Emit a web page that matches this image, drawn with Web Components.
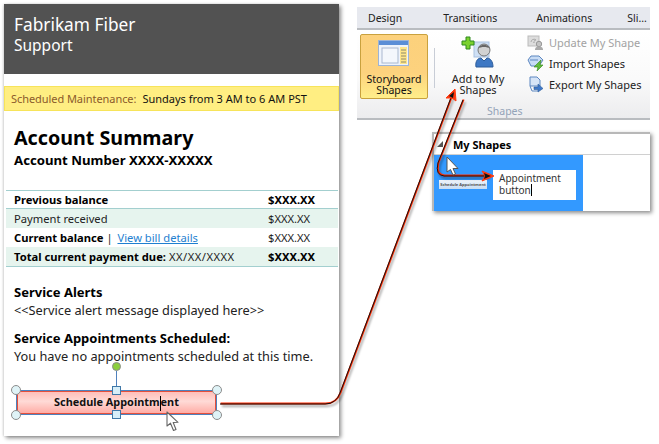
<!DOCTYPE html>
<html>
<head>
<meta charset="utf-8">
<style>
  html, body { margin: 0; height: 100%; background: #fff; overflow: hidden; }
  body { font-family: "Noto Sans", "Liberation Sans", sans-serif; color: #111; }
  #stage { position: relative; width: 659px; height: 444px; display: flex; padding: 4px 0 0 4px; box-sizing: border-box; }
</style>
</head>
<body>
<div id="stage">
  <fab-page>
    <fab-header>
      <span>Fabrikam Fiber</span>
      <span slot="sub">Support</span>
    </fab-header>
    <fab-banner label="Scheduled Maintenance:">Sundays from 3 AM to 6 AM PST</fab-banner>
    <fab-summary title-text="Account Summary" number="Account Number XXXX-XXXXX"></fab-summary>
    <fab-balances>
      <fab-row amount="$XXX.XX" bold><b>Previous balance</b></fab-row>
      <fab-row amount="$XXX.XX" shade>Payment received</fab-row>
      <fab-row amount="$XXX.XX"><b>Current balance</b>&nbsp;|&nbsp;<a>View bill details</a></fab-row>
      <fab-row amount="$XXX.XX" bold shade><b>Total current payment due:</b>&nbsp;<span>XX/XX/XXXX</span></fab-row>
    </fab-balances>
    <fab-notice heading="Service Alerts">&lt;&lt;Service alert message displayed here&gt;&gt;</fab-notice>
    <fab-notice heading="Service Appointments Scheduled:">You have no appointments scheduled at this time.</fab-notice>
    <fab-selected-button>Schedule Appointm<i></i>ent</fab-selected-button>
  </fab-page>
  <div style="display:flex;flex-direction:column;margin-left:18px">
    <sb-ribbon></sb-ribbon>
    <sb-my-shapes></sb-my-shapes>
  </div>
  <sb-connectors></sb-connectors>
</div>

<script>
class Component extends HTMLElement {
  constructor(template) {
    super()
    const _template = document.createElement('template')
    _template.innerHTML = template
    this.attachShadow({ mode: 'open' })
    this.shadowRoot.appendChild(_template.content.cloneNode(true))
  }
}

class FabPage extends Component {
  constructor() {
    super(`
      <style>
        :host { display: flex; flex-direction: column; width: 335px; height: 432px; background: #fff;
          box-shadow: 2px 2px 4px rgba(0,0,0,.45), -1px 0 2px rgba(0,0,0,.12); }
      </style>
      <slot></slot>
    `)
  }
}

class FabHeader extends Component {
  constructor() {
    super(`
      <style>
        :host { display: flex; flex-direction: column; height: 70px; box-sizing: border-box; padding: 10px 10px 0; background: #525252; color: #fff; }
        .a { font-size: 17.3px; line-height: 22px; }
        .b { font-size: 15.5px; line-height: 18px; }
      </style>
      <div class="a"><slot></slot></div>
      <div class="b"><slot name="sub"></slot></div>
    `)
  }
}

class FabBanner extends Component {
  constructor() {
    super(`
      <style>
        :host { display: flex; align-items: center; height: 25px; box-sizing: border-box; margin-top: 12px; padding-left: 6px;
          background: #ffee82; border: 1px solid #f7e45a; font-size: 11px; color: #111; white-space: nowrap; }
        span { color: #8b5a2b; margin-right: 6px; letter-spacing: -.06px; }
      </style>
      <span></span><slot></slot>
    `)
  }
  connectedCallback() {
    this.shadowRoot.querySelector('span').textContent = this.getAttribute('label')
  }
}

class FabSummary extends Component {
  constructor() {
    super(`
      <style>
        :host { display: block; padding: 14px 10px 0; color: #000; font-weight: 700; height: 79px; box-sizing: border-box; }
        h1 { margin: 0; font-size: 19.7px; line-height: 26px; }
        h2 { margin: 0; font-size: 13.2px; line-height: 19px; }
      </style>
      <h1></h1><h2></h2>
    `)
  }
  connectedCallback() {
    this.shadowRoot.querySelector('h1').textContent = this.getAttribute('title-text')
    this.shadowRoot.querySelector('h2').textContent = this.getAttribute('number')
  }
}

class FabBalances extends Component {
  constructor() {
    super(`
      <style>
        :host { display: block; margin: 0 1px 6.6px 2px; border-top: 1px solid #a3cfcf; border-bottom: 1px solid #a3cfcf; }
      </style>
      <slot></slot>
    `)
  }
}

class FabRow extends Component {
  constructor() {
    super(`
      <style>
        :host { display: grid; grid-template-columns: 254px 1fr; align-items: center; height: 19px; padding-left: 8px;
          font-size: 11.2px; color: #222; white-space: nowrap; }
        :host([shade]) { background: #e6f4ee; }
        :host(:first-child) { border-bottom: 1px solid #a3cfcf; height: 17px; }
        ::slotted(b) { color: #000; }
        ::slotted(a) { color: #1f7fd0; text-decoration: underline; margin-left: 2px; }
        ::slotted(span) { letter-spacing: .5px; }
        :host([bold]) .amt { font-weight: 700; color: #000; }
      </style>
      <div><slot></slot></div>
      <div class="amt"></div>
    `)
  }
  connectedCallback() {
    this.shadowRoot.querySelector('.amt').textContent = this.getAttribute('amount')
  }
}

class FabNotice extends Component {
  constructor() {
    super(`
      <style>
        :host { display: block; padding: 10.8px 10px 0; font-size: 12.75px; line-height: 17.6px; color: #222; white-space: nowrap; }
        h3 { margin: 0; font-size: 13px; line-height: 17.6px; color: #000; font-weight: 700; }
      </style>
      <h3></h3><slot></slot>
    `)
  }
  connectedCallback() {
    this.shadowRoot.querySelector('h3').textContent = this.getAttribute('heading')
  }
}

class FabSelectedButton extends Component {
  constructor() {
    super(`
      <style>
        :host { position: relative; display: flex; align-items: center; justify-content: center; width: 201px; height: 25px; box-sizing: border-box;
          margin: 24.4px 0 0 12px; border: 1px solid #4f81bd; outline: 1px solid #e4503c; outline-offset: -2px;
          background: linear-gradient(#ffbcb6, #ffdad6 45%, #ffa9a2); font-size: 10.9px; font-weight: 700; color: #111; white-space: nowrap; }
        ::slotted(i) { display: inline-block; width: 0; height: 15px; border-left: 1px solid #000; vertical-align: middle; }
        .h { position: absolute; box-sizing: border-box; }
        .c { width: 10px; height: 10px; border-radius: 50%; background: #dff3f7; border: 1px solid #8c8c8c; }
        .s { width: 9px; height: 9px; background: #d7eef8; border: 1px solid #3f78a8; }
        .r { width: 9px; height: 9px; border-radius: 50%; background: #8ccf3f; border: 1px solid #8c8c8c; left: 95px; top: -29px; }
        .stem { position: absolute; left: 99px; top: -20px; width: 1px; height: 17px; background: #4f81bd; }
        svg { position: absolute; left: 148px; top: 20px; }
      </style>
      <span class="stem"></span>
      <span class="h r"></span>
      <span class="h c" style="left:-6px;top:-6px"></span>
      <span class="h c" style="right:-6px;top:-6px"></span>
      <span class="h c" style="left:-6px;bottom:-6px"></span>
      <span class="h c" style="right:-6px;bottom:-6px"></span>
      <span class="h s" style="left:95px;top:-5px"></span>
      <span class="h s" style="left:95px;bottom:-5px"></span>
      <div><slot></slot></div>
      <svg width="16" height="22" viewBox="0 0 16 22"><path d="M2 1 L2 15 L5.5 12.2 L8.5 19.5 L11 18.5 L8.2 11.5 L13 11.3 Z" fill="#fff" stroke="#666" stroke-width="1.1" stroke-linejoin="round"/></svg>
    `)
  }
}

class SbRibbon extends Component {
  constructor() {
    super(`
      <style>
        :host { display: block; width: 293px; margin-top: 3px; font-size: 10.5px; color: #222; }
        .tabs { display: flex; height: 21px; align-items: center; background: #e7e9ef; border-bottom: 2px solid #b9bcc0; white-space: nowrap; }
        .body { position: relative; display: flex; height: 90px; box-sizing: border-box; background: linear-gradient(#fff, #fafafa 55%, #ececee); border-bottom: 2px solid #b9bcc0; padding: 4px 0 0 3px; }
        .big { display: flex; flex-direction: column; align-items: center; box-sizing: border-box; width: 68px; height: 65px; text-align: center; line-height: 11px; }
        .on { background: linear-gradient(#fcd17c, #fdd27e 60%, #ffee8a); border: 1px solid #c9a13e; border-radius: 2px; padding-top: 5px; color: #111; }
        .add { width: 86px; padding-top: 2px; font-size: 11px; }
        .sep { width: 1px; height: 40px; margin: 14px 0 0 6px; background: #c8cdd6; }
        .list { display: flex; flex-direction: column; margin: -2px 0 0 6px; font-size: 11px; }
        .item { display: flex; align-items: center; gap: 5px; height: 21px; white-space: nowrap; }
        .off { color: #a2a2a2; }
        .group { position: absolute; left: 130px; bottom: 0; width: 32px; color: #93a3b8; font-size: 10.5px; line-height: 14px; }
        svg { display: block; flex: none; }
      </style>
      <div class="tabs">
        <span style="margin-left:11px">Design</span>
        <span style="margin-left:41px">Transitions</span>
        <span style="margin-left:39px">Animations</span>
        <span style="margin-left:35px">Sli...</span>
      </div>
      <div class="body">
        <div class="big on">
          <svg width="32" height="27" viewBox="0 0 32 27" style="margin-bottom:7px">
            <rect x=".5" y=".5" width="30" height="25" fill="#eef3fb" stroke="#9db4d6"/>
            <rect x="1" y="1" width="29" height="4" fill="#5b8ed6"/>
            <rect x="4" y="8" width="16" height="15" fill="#f4f7fc" stroke="#a9b8cf"/>
            <rect x="22" y="7" width="7" height="17" fill="#ffe68a"/>
            <path d="M23 10h5M23 13h5M23 16h5M23 19h5M23 22h5" stroke="#8e8a6a"/>
          </svg>
          Storyboard Shapes
        </div>
        <div class="sep"></div>
        <div class="big add">
          <svg width="36" height="33" viewBox="0 0 36 33" style="margin:0 0 4px 0">
            <rect x="14" y="6" width="15" height="15" fill="#cfe0f5" stroke="#a9c1e0"/>
            <path d="M6 1h4v4h4v4h-4v4H6V9H2V5h4z" fill="#7bd12f" stroke="#2f8a1f"/>
            <circle cx="24" cy="14" r="6" fill="#d2d2d2" stroke="#777"/>
            <path d="M18 12.500c2-5 10-5 12 0-3-2-9-2-12 0z" fill="#666"/>
            <path d="M16 31c-1-6 2-9 5-9l3 3 3-3c3 0 6 3 6 9z" fill="#3e78c4" stroke="#2c5c9a"/>
          </svg>
          Add to My Shapes
        </div>
        <div class="list">
          <div class="item off">
            <svg width="17" height="17" viewBox="0 0 17 17"><rect x="1" y="2" width="11" height="10" fill="#ddd" stroke="#bbb"/><path d="M4 8a3 3 0 0 1 5-2M9 6l-2 .3M8 8l-2 .3" stroke="#aaa" fill="none"/><circle cx="12" cy="10" r="2.7" fill="#c4c4c4" stroke="#999"/><path d="M8 16c0-3 2-3.5 4-3.5s4 .5 4 3.5z" fill="#aaa"/></svg>
            <span>Update My Shape</span>
          </div>
          <div class="item">
            <svg width="17" height="17" viewBox="0 0 17 17"><path d="M4 1h8l4 4-4 6H4L1 5z" fill="#c8dcf5" stroke="#5d87c0"/><path d="M3 5h8" stroke="#5d87c0"/><path d="M14 5l-1 5h3l-6 6 1-4H7z" fill="#62bd3a" stroke="#3d8d27" stroke-width=".7"/></svg>
            <span>Import Shapes</span>
          </div>
          <div class="item">
            <svg width="17" height="17" viewBox="0 0 17 17"><path d="M3 1h7l3 3v6H3z" fill="#d6e4f6" stroke="#5d87c0"/><path d="M3 10l2 5h6" fill="none" stroke="#5d87c0"/><path d="M7 11h4V8l5 4.5L11 16v-2.5H7z" fill="#3f78c8" stroke="#2c5c9a" stroke-width=".6"/></svg>
            <span>Export My Shapes</span>
          </div>
        </div>
        <div class="group">Shapes</div>
      </div>
    `)
  }
}

class SbMyShapes extends Component {
  constructor() {
    super(`
      <style>
        :host { display: block; width: 218px; height: 79px; margin: 12px 0 0 75px; background: #fff; box-sizing: border-box;
          border-top: 2px solid #b8b8b8; border-left: 2px solid #b8b8b8; box-shadow: 2px 2px 4px rgba(0,0,0,.45); }
        .head { display: flex; align-items: center; height: 20px; padding-left: 3px; border-bottom: 1px solid #d0d0d0; font-size: 11px; font-weight: 700; color: #000; }
        .tri { width: 0; height: 0; border-left: 6px solid transparent; border-bottom: 6px solid #555; margin-right: 10px; }
        .tile { display: flex; align-items: center; position: relative; width: 149px; height: 56px; background: #3399ff; box-sizing: border-box; }
        .thumb { position: absolute; left: 5px; top: 25px; width: 48px; height: 9px; background: linear-gradient(#eef4fb, #c7dcf3); display: flex; align-items: center; justify-content: center; font-size: 4px; font-weight: 700; color: #555; white-space: nowrap; }
        .name { position: absolute; left: 59px; top: 15px; width: 83px; height: 30px; box-sizing: border-box; background: #fff; padding: 2px 5px 2px 6px; font-size: 10px; line-height: 12px; color: #333; }
        .name i { display: inline-block; width: 1px; height: 12px; background: #000; vertical-align: top; }
      </style>
      <div class="head"><span class="tri"></span><span>My Shapes</span></div>
      <div class="tile">
        <div class="thumb">Schedule Appointment</div>
        <div class="name">Appointment button<i></i></div>
      </div>
    `)
  }
}

// arrows and pointer lie over both panels, so they get their own full size layer
class SbConnectors extends Component {
  constructor() {
    const line = (d) => `
      <path d="${d}" fill="none" stroke="#000" stroke-opacity=".35" stroke-width="2" transform="translate(2 2)" filter="url(#soft)"/>
      <path d="${d}" fill="none" stroke="#ff2a00" stroke-width="2" transform="translate(.6 -.5)"/>
      <path d="${d}" fill="none" stroke="#111" stroke-width="1"/>`
    super(`
      <style>
        :host { position: absolute; left: 0; top: 0; width: 659px; height: 444px; pointer-events: none; }
        svg { display: block; }
      </style>
      <svg width="659" height="444" viewBox="0 0 659 444">
        <defs><filter id="soft" x="-10%" y="-10%" width="120%" height="120%"><feGaussianBlur stdDeviation="1"/></filter></defs>
        ${line('M220 404 H325 Q336 404 340 393 L452 95')}
        <path d="M455 89 L456 101 L452 98 L446 98 Z" fill="#ff3a10" stroke="#ff3a10" stroke-width="1"/>
        <path d="M454 92 L453 98 L449 96 Z" fill="#111"/>
        ${line('M463 100 L438 163 Q435 175 444 176 H488')}
        <path d="M494 176 L482 171 L485 176 L482 181 Z" fill="#ff3a10" stroke="#ff3a10" stroke-width="1"/>
        <path d="M491 176 L484 173 L485 176 L484 179 Z" fill="#111"/>
        <path d="M447 157 L447 172 L450.5 169.5 L453 175 L455.5 174 L453 168.5 L458 168.5 Z" fill="#fff" stroke="#555" stroke-width="1" stroke-linejoin="round"/>
      </svg>
    `)
  }
}

window.customElements.define('fab-page', FabPage)
window.customElements.define('fab-header', FabHeader)
window.customElements.define('fab-banner', FabBanner)
window.customElements.define('fab-summary', FabSummary)
window.customElements.define('fab-balances', FabBalances)
window.customElements.define('fab-row', FabRow)
window.customElements.define('fab-notice', FabNotice)
window.customElements.define('fab-selected-button', FabSelectedButton)
window.customElements.define('sb-ribbon', SbRibbon)
window.customElements.define('sb-my-shapes', SbMyShapes)
window.customElements.define('sb-connectors', SbConnectors)
</script>
</body>
</html>
